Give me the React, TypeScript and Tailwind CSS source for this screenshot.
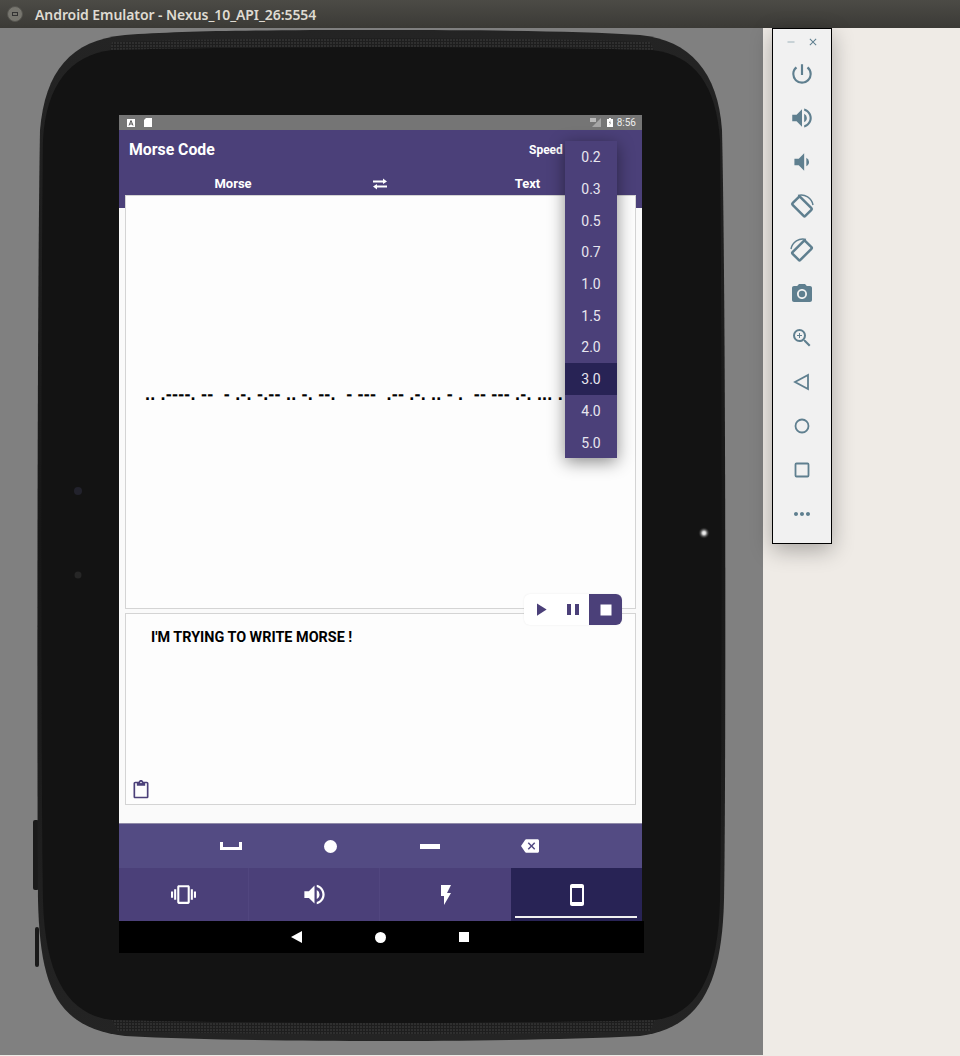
import React from "react";
import {
  MdVibration, MdVolumeUp, MdVolumeDown, MdFlashOn, MdSmartphone, MdBackspace, MdPlayArrow, MdStop,
  MdContentPaste, MdPowerSettingsNew, MdPhotoCamera, MdZoomIn, MdMoreHoriz, MdClose, MdRemove,
} from "react-icons/md";

const speeds = ["0.2", "0.3", "0.5", "0.7", "1.0", "1.5", "2.0", "3.0", "4.0", "5.0"];
const morse = ".. .----. --  - .-. -.-- .. -. --.  - ---  .-- .-. .. - .  -- --- .-. ... .";

function TabletBody() {
  return (
    <svg className="absolute left-0 top-0" width="763" height="1027" viewBox="0 28 763 1027">
      <defs>
        <pattern id="mesh" width="3" height="3" patternUnits="userSpaceOnUse">
          <rect width="3" height="3" fill="#1e1e1e" />
          <circle cx="1" cy="1" r="0.8" fill="#444" />
        </pattern>
        <radialGradient id="glow">
          <stop offset="0" stopColor="#fff" />
          <stop offset="0.3" stopColor="#ccc" />
          <stop offset="1" stopColor="#141414" stopOpacity="0" />
        </radialGradient>
        <linearGradient id="edge" x1="0" y1="0" x2="0" y2="1">
          <stop offset="0" stopColor="#242424" />
          <stop offset="0.5" stopColor="#171717" />
          <stop offset="1" stopColor="#242424" />
        </linearGradient>
      </defs>
      <rect x="33" y="820" width="6" height="70" rx="2" fill="#1a1a1a" />
      <rect x="35" y="927" width="4" height="40" rx="2" fill="#1a1a1a" />
      <path d="M380 30C250 30 180 31 125 35C70 40 45 72 40 130C37 300 37 800 38 900C40 985 55 1028 125 1036C200 1040 300 1041 380 1041C460 1041 560 1040 640 1036C700 1028 722 985 724 900C726 800 726 300 722 130C718 72 690 40 640 35C580 31 500 30 380 30Z" fill="url(#edge)" />
      <path d="M112 50C250 46 510 46 652 50C695 55 716 85 720 140C722 300 722 800 720 900C718 980 695 1015 655 1020C510 1024 250 1024 112 1020C70 1015 45 980 43 900C41 800 41 300 43 140C46 85 70 55 112 50Z" fill="#131313" />
      <path d="M112 42C250 37 510 37 650 42L654 50C510 46 250 46 110 50Z" fill="url(#mesh)" />
      <path d="M112 1020C250 1024 510 1024 655 1020L650 1031C510 1035 250 1035 118 1031Z" fill="url(#mesh)" />
      <circle cx="78" cy="491" r="4" fill="#22222c" />
      <circle cx="78" cy="575" r="3.500" fill="#262626" />
      <circle cx="704" cy="533" r="6" fill="url(#glow)" />
    </svg>
  );
}

function StatusBar() {
  return (
    <div className="h-[15px] bg-[#757575] flex items-center pl-[8px] pr-[6px] gap-[9px] text-white">
      <svg width="8" height="8" viewBox="0 0 8 8"><rect width="8" height="8" fill="#fff" /><path d="M2 6.500L4 1.500L6 6.500M3 5H5" stroke="#555" strokeWidth="1" fill="none" /></svg>
      <svg width="8" height="9" viewBox="0 0 8 9"><path d="M2 0H8V9H0V2Z" fill="#fff" /></svg>
      <div className="ml-auto flex items-center gap-[5px]">
        <svg width="12" height="9" viewBox="0 0 12 9"><path d="M11 0V9H2Z" fill="#a5a5a5" /><path d="M1 0V4M3 0V4M5 0V4" stroke="#fff" strokeWidth="1" /></svg>
        <svg width="6" height="9" viewBox="0 0 6 9" className="mr-[-1px]"><path d="M2 0H4V1H6V9H0V1H2Z" fill="#fff" /><path d="M3.500 2L2 5H3L2.500 7.500L4 4.500H3Z" fill="#757575" /></svg>
        <span className="text-[10px] leading-none font-['Roboto',sans-serif] text-[#eee]">8:56</span>
      </div>
    </div>
  );
}

function Dropdown() {
  return (
    <div className="absolute left-[446px] top-[26px] w-[52px] bg-[#4b4079] shadow-[0_4px_16px_rgba(0,0,0,0.45)]">
      {speeds.map((s) => (
        <div key={s} className={`h-[31.7px] pt-[2px] flex items-center justify-center text-[14px] text-[#e8e6ef] font-['Roboto',sans-serif] ${s === "3.0" ? "bg-[#282355]" : ""}`}>
          {s}
        </div>
      ))}
    </div>
  );
}

function AppBar() {
  return (
    <div className="h-[78px] bg-[#4b4079] text-white font-['Roboto',sans-serif] font-bold">
      <div className="h-[40px] flex items-center pl-[10px] pr-[80px]">
        <span className="text-[15.8px]">Morse Code</span>
        <span className="ml-auto text-[12px] mr-[-47px] w-[80px]">Speed</span>
      </div>
      <div className="h-[28px] flex items-center text-[13px]">
        <span className="w-[228px] text-center">Morse</span>
        <div className="w-[66px] flex justify-center">
          <svg width="14" height="12" viewBox="0 0 14 12" fill="#fff">
            <path d="M0 3H10V1L14 4L10 6.500V5H0Z" transform="translate(0 -0.500)" />
            <path d="M14 9H4V11L0 8L4 5.500V7H14Z" transform="translate(0 0.500)" />
          </svg>
        </div>
        <span className="w-[229px] text-center">Text</span>
      </div>
    </div>
  );
}

function Cards() {
  return (
    <div className="relative h-[615px] bg-[#fafafa] px-[6px] flex flex-col">
      <div className="relative -mt-[13px] h-[414px] shrink-0 bg-[#fdfdfd] border border-[#d4d4d4] flex items-center pl-[19px] overflow-hidden">
        <span className="whitespace-pre text-[18px] tracking-[0.2px] leading-none font-bold text-black font-['Liberation_Sans',sans-serif] mt-[-16px] [text-rendering:geometricPrecision]">{morse}</span>
      </div>
      <div className="mt-[4px] h-[192px] shrink-0 bg-[#fdfdfd] border border-[#d4d4d4] relative pl-[25px] pt-[15px]">
        <span className="text-[14.4px] font-bold leading-[18px] text-black font-['Roboto',sans-serif] block">I'M TRYING TO WRITE MORSE !</span>
        <MdContentPaste className="absolute left-[5px] bottom-[4px] text-[#4b4079]" size={20} />
      </div>
      <div className="absolute left-[405px] top-[386px] w-[98px] h-[31px] rounded-[6px] overflow-hidden bg-white flex shadow-[0_0_2px_rgba(0,0,0,0.08)]">
        <div className="w-[33px] flex items-center justify-center text-[#4b4079]"><MdPlayArrow size={21} /></div>
        <div className="w-[32px] flex items-center justify-center">
          <svg width="12" height="11" viewBox="0 0 12 11" fill="#4b4079"><rect x="0" width="4" height="11" /><rect x="8" width="4" height="11" /></svg>
        </div>
        <div className="w-[33px] bg-[#4b4079] flex items-center justify-center text-white"><MdStop size={22} /></div>
      </div>
    </div>
  );
}

function KeyBar() {
  return (
    <div className="h-[45px] bg-[#534b83] flex items-center pl-[62px] text-white border-t border-[#8f8aa8]">
      <div className="w-[100px] flex justify-center">
        <svg width="22" height="9" viewBox="0 0 22 9"><path d="M0 0H3V5H19V0H22V8H0Z" fill="#fff" /></svg>
      </div>
      <div className="w-[99px] flex justify-center"><div className="w-[13px] h-[13px] rounded-full bg-white" /></div>
      <div className="w-[100px] flex justify-center"><div className="w-[20px] h-[5px] bg-white" /></div>
      <div className="w-[100px] flex justify-center"><MdBackspace size={18} /></div>
    </div>
  );
}

function TabBar() {
  return (
    <div className="h-[53px] bg-[#4b4079] flex text-white">
      <div className="w-[130px] border-r border-[#51467f] flex items-center justify-center"><MdVibration size={25} /></div>
      <div className="w-[131px] border-r border-[#51467f] flex items-center justify-center"><MdVolumeUp size={27} /></div>
      <div className="w-[131px] flex items-center justify-center"><MdFlashOn size={24} /></div>
      <div className="w-[131px] bg-[#282355] relative flex items-center justify-center">
        <MdSmartphone size={24} />
        <div className="absolute left-[4px] right-[5px] bottom-[3px] h-[2px] bg-[#f1f1f1]" />
      </div>
    </div>
  );
}

function NavBar() {
  return (
    <div className="h-[32px] w-[525px] bg-black flex items-center pl-[172px] text-white">
      <svg width="11" height="12" viewBox="0 0 11 12"><path d="M11 0V12L0 6Z" fill="#fff" /></svg>
      <div className="ml-[73px] w-[11px] h-[11px] rounded-full bg-white" />
      <div className="ml-[73px] w-[10px] h-[10px] bg-white" />
    </div>
  );
}

function Rotate({ flip }: { flip?: boolean }) {
  return (
    <svg width="26" height="26" viewBox="0 0 26 26" fill="none" stroke="#5f7f8f" className={flip ? "-scale-x-100" : ""}>
      <rect x="4" y="8" width="18" height="11" rx="1.200" strokeWidth="2.500" transform="rotate(45 13 13.500)" />
      <path d="M9 2.500A12 12 0 0 1 24 12" strokeWidth="1.500" />
    </svg>
  );
}

function SideBar() {
  const c = "h-[44px] flex items-center justify-center shrink-0";
  return (
    <div className="absolute left-[772px] top-[28px] w-[60px] h-[516px] bg-[#f1f1f1] border border-black shadow-[0_6px_22px_rgba(0,0,0,0.3)] text-[#5f7f8f] flex flex-col items-center">
      <div className="h-[23px] w-full flex items-center justify-center gap-[10px] shrink-0 pt-[3px]">
        <MdRemove size={12} className="text-[#9fb2bb]" />
        <MdClose size={12} />
      </div>
      <div className={c}><MdPowerSettingsNew size={26} /></div>
      <div className={c}><MdVolumeUp size={26} /></div>
      <div className={c}><MdVolumeDown size={26} /></div>
      <div className={c}><Rotate /></div>
      <div className={c}><Rotate flip /></div>
      <div className={c}><MdPhotoCamera size={24} /></div>
      <div className={c}><MdZoomIn size={24} /></div>
      <div className={c}>
        <svg width="20" height="20" viewBox="0 0 20 20" fill="none" stroke="#5f7f8f" strokeWidth="1.800"><path d="M16 3V17L3 10Z" /></svg>
      </div>
      <div className={c}>
        <svg width="20" height="20" viewBox="0 0 20 20" fill="none" stroke="#5f7f8f" strokeWidth="1.800"><circle cx="10" cy="10" r="6.500" /></svg>
      </div>
      <div className={c}>
        <svg width="20" height="20" viewBox="0 0 20 20" fill="none" stroke="#5f7f8f" strokeWidth="1.800"><rect x="3.500" y="3.500" width="13" height="13" rx="1" /></svg>
      </div>
      <div className={c}><MdMoreHoriz size={24} /></div>
    </div>
  );
}

export default function App() {
  return (
    <div className="relative w-[960px] h-[1056px] overflow-hidden bg-[#efebe6]">
      <div className="h-[28px] bg-gradient-to-b from-[#4c4b46] to-[#3b3a36] flex items-center pl-[7px]">
        <div className="w-[16px] h-[16px] rounded-full bg-[#77766f] border border-[#55544f] flex items-center justify-center">
          <div className="w-[6px] h-[4px] border border-[#333]" />
        </div>
        <span className="ml-[12px] text-[14px] tracking-[-0.07px] font-semibold text-[#dfdbd2] font-['Noto_Sans',sans-serif]">Android Emulator - Nexus_10_API_26:5554</span>
      </div>
      <div className="relative w-[763px] h-[1027px] bg-[#808080]">
        <TabletBody />
        <div className="absolute left-[119px] top-[87px] w-[523px]">
          <StatusBar />
          <AppBar />
          <Cards />
          <KeyBar />
          <TabBar />
          <NavBar />
          <Dropdown />
        </div>
      </div>
      <SideBar />
    </div>
  );
}
